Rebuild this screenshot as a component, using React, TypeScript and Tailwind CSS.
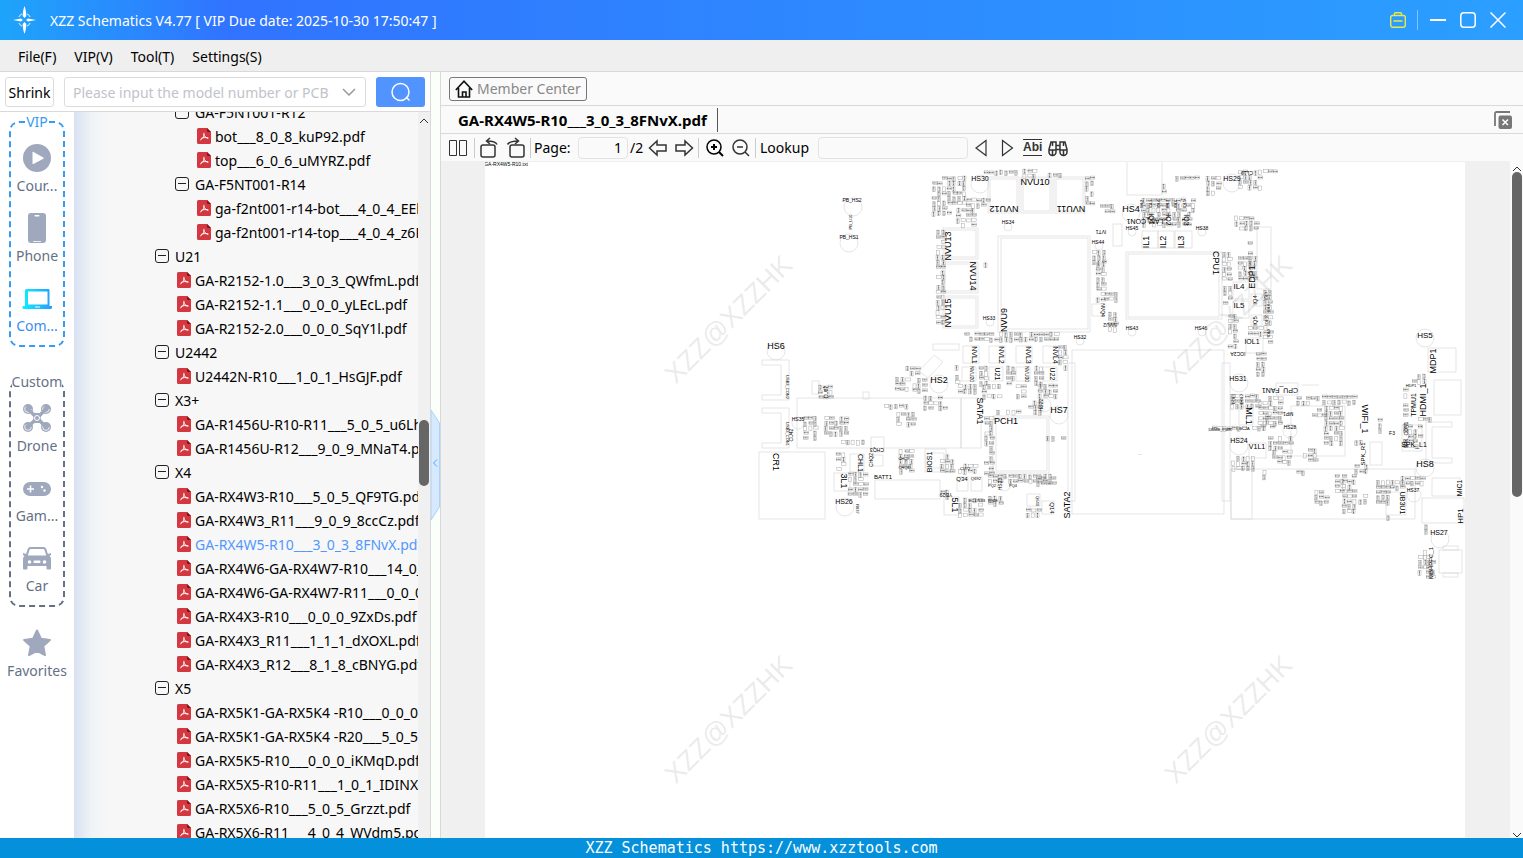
import { useState } from "react"
import type { ReactNode } from "react"

type TreeRow = {
  level: number
  label: string
  file?: boolean
}

const rows: TreeRow[] = [
  { level: 1, label: "GA-F5NT001-R12" },
  { level: 3, label: "bot___8_0_8_kuP92.pdf", file: true },
  { level: 3, label: "top___6_0_6_uMYRZ.pdf", file: true },
  { level: 1, label: "GA-F5NT001-R14" },
  { level: 3, label: "ga-f2nt001-r14-bot___4_0_4_EEk2P.pdf", file: true },
  { level: 3, label: "ga-f2nt001-r14-top___4_0_4_z6Rtq.pdf", file: true },
  { level: 0, label: "U21" },
  { level: 2, label: "GA-R2152-1.0___3_0_3_QWfmL.pdf", file: true },
  { level: 2, label: "GA-R2152-1.1___0_0_0_yLEcL.pdf", file: true },
  { level: 2, label: "GA-R2152-2.0___0_0_0_SqY1l.pdf", file: true },
  { level: 0, label: "U2442" },
  { level: 2, label: "U2442N-R10___1_0_1_HsGJF.pdf", file: true },
  { level: 0, label: "X3+" },
  { level: 2, label: "GA-R1456U-R10-R11___5_0_5_u6LhC.pdf", file: true },
  { level: 2, label: "GA-R1456U-R12___9_0_9_MNaT4.pdf", file: true },
  { level: 0, label: "X4" },
  { level: 2, label: "GA-RX4W3-R10___5_0_5_QF9TG.pdf", file: true },
  { level: 2, label: "GA-RX4W3_R11___9_0_9_8ccCz.pdf", file: true },
  { level: 2, label: "GA-RX4W5-R10___3_0_3_8FNvX.pdf", file: true },
  { level: 2, label: "GA-RX4W6-GA-RX4W7-R10___14_0_14.pdf", file: true },
  { level: 2, label: "GA-RX4W6-GA-RX4W7-R11___0_0_0.pdf", file: true },
  { level: 2, label: "GA-RX4X3-R10___0_0_0_9ZxDs.pdf", file: true },
  { level: 2, label: "GA-RX4X3_R11___1_1_1_dXOXL.pdf", file: true },
  { level: 2, label: "GA-RX4X3_R12___8_1_8_cBNYG.pdf", file: true },
  { level: 0, label: "X5" },
  { level: 2, label: "GA-RX5K1-GA-RX5K4 -R10___0_0_0.pdf", file: true },
  { level: 2, label: "GA-RX5K1-GA-RX5K4 -R20___5_0_5.pdf", file: true },
  { level: 2, label: "GA-RX5K5-R10___0_0_0_iKMqD.pdf", file: true },
  { level: 2, label: "GA-RX5X5-R10-R11___1_0_1_IDINX.pdf", file: true },
  { level: 2, label: "GA-RX5X6-R10___5_0_5_Grzzt.pdf", file: true },
  { level: 2, label: "GA-RX5X6-R11___4_0_4_WVdm5.pdf", file: true },
]

const indent = ["pl-[81px]", "pl-[101px]", "pl-[103px]", "pl-[123px]"]

const PdfIcon = () => (
  <svg viewBox="0 0 14 16" className="h-4 w-[14px] shrink-0">
    <path d="M1.500 0H10l4 4v10.500a1.500 1.500 0 0 1-1.500 1.500h-11A1.500 1.500 0 0 1 0 14.500v-13A1.500 1.500 0 0 1 1.500 0z" fill="#d4373f" />
    <path d="M10 0l4 4h-2.800A1.200 1.200 0 0 1 10 2.800z" fill="#7e1418" />
    <path d="M6.900 5.200c.6 2-.4 4.800-3.400 6.600M6.800 6.500c.5 2 2 3.500 4.200 3.600M4.300 10.400c1.800-.9 4-1.200 6.500-.4" fill="none" stroke="#fff" strokeWidth="1" strokeLinecap="round" />
  </svg>
)

const MinusBox = () => (
  <svg viewBox="0 0 14 14" className="size-[14px] shrink-0" fill="none" stroke="#222" strokeWidth="1">
    <rect x=".5" y=".5" width="13" height="13" rx="2.500" />
    <path d="M3 6.500h8" />
  </svg>
)

const Tree = () => {
  const [selected, setSelected] = useState("GA-RX4W5-R10___3_0_3_8FNvX.pdf")

  return (
    <div className="flex min-w-0 flex-1 overflow-hidden bg-[#f7f7f7]">
      <ul className="-mt-3 min-w-0 flex-1 overflow-hidden bg-linear-to-r from-[#d8e1f1] via-[#f0f3f7] via-5% to-[#f7f7f7] to-10%">
        {rows.map((row) => (
          <li key={row.label}>
            <button
              onClick={() => row.file && setSelected(row.label)}
              className={`${indent[row.level]} flex h-6 w-full items-center whitespace-nowrap text-[14px] ${
                row.file ? "gap-1" : "gap-1.5"
              } ${selected === row.label ? "text-[#5297ff]" : "text-black"}`}
            >
              {row.file ? <PdfIcon /> : <MinusBox />}
              {row.label}
            </button>
          </li>
        ))}
      </ul>
      <div className="flex w-3 shrink-0 flex-col items-center bg-[#f0f0f0] pt-1.5">
        <svg viewBox="0 0 10 6" className="h-1.5 w-2.5" fill="none" stroke="#333">
          <path d="M1 5l4-4 4 4" />
        </svg>
        <div className="mt-[296px] h-[66px] w-2.5 rounded-full bg-[#666]" />
      </div>
    </div>
  )
}

type NavItemProps = {
  label: string
  active?: boolean
  children: ReactNode
}

const NavItem = ({ label, active, children }: NavItemProps) => (
  <button
    className={`flex h-[70px] w-full flex-col items-center whitespace-nowrap pt-3 text-[14px] ${
      active ? "text-[#3b8df0]" : "text-[#667085]"
    }`}
  >
    <svg viewBox="0 0 28 28" className="size-7 shrink-0 overflow-visible" fill="#9fa8bc">
      {children}
    </svg>
    <span className="mt-1 leading-5">{label}</span>
  </button>
)

const Sidebar = () => (
  <nav className="flex w-[74px] shrink-0 flex-col items-center bg-white">
    <fieldset className="w-14 min-w-0 rounded-[10px] border-2 border-dashed border-[#359bf3] pb-[3px]">
      <legend className="mx-auto text-[14px] leading-5 text-[#359bf3]">VIP</legend>
      <NavItem label="Cour...">
        <circle cx="14" cy="14" r="14" />
        <path d="M9.500 8.500v11c0 .6.500.800 1 .5l9.800-5.300c.5-.3.5-.9 0-1.200L10.500 8c-.5-.3-1-.1-1 .5z" fill="#fff" />
      </NavItem>
      <NavItem label="Phone">
        <rect x="5" y="-1" width="18" height="30" rx="3" />
        <rect x="11.500" y="1" width="5" height="1.500" rx=".7" fill="#fff" />
        <path d="M10 27.500h8" stroke="#fff" strokeWidth=".8" />
      </NavItem>
      <NavItem label="Com..." active>
        <defs>
          <linearGradient id="laptop" x1="0" y1="0" x2="1" y2="0">
            <stop offset="0" stopColor="#0bf0ff" />
            <stop offset="1" stopColor="#259cff" />
          </linearGradient>
        </defs>
        <path
          d="M3.500 5h22a1 1 0 0 1 1 1v16h2.500v1.500a1.500 1.500 0 0 1-1.500 1.500H1a1.500 1.500 0 0 1-1.500-1.500V22H2V6.500A1.500 1.500 0 0 1 3.500 5zM5 7.500v13h19.500v-13zM12 22.500v1h5v-1z"
          fill="url(#laptop)"
          fillRule="evenodd"
        />
      </NavItem>
    </fieldset>
    <fieldset className="mt-[25px] w-14 min-w-0 rounded-[10px] border-2 border-dashed border-[#667085] pb-[3px]">
      <legend className="mx-auto flex w-[50px] justify-center text-[14px] leading-5 text-[#667085]">Custom</legend>
      <NavItem label="Drone">
        {[5, 23].map((cx) =>
          [5, 23].map((cy) => (
            <g key={`${cx}-${cy}`}>
              <circle cx={cx} cy={cy} r="5" />
              <circle cx={cx} cy={cy} r="3.300" fill="none" stroke="#fff" strokeWidth=".8" strokeDasharray="13 8" />
            </g>
          )),
        )}
        <path d="M6 6l16 16M22 6L6 22" stroke="#9fa8bc" strokeWidth="3.500" />
        <path d="M9 9h10l-1.500 5L19 19H9l1.500-5z" />
        <circle cx="14" cy="14" r="2.500" fill="none" stroke="#fff" />
      </NavItem>
      <NavItem label="Gam...">
        <rect x="0" y="8" width="28" height="14" rx="7" />
        <path d="M7.500 11.500v7M4 15h7" stroke="#fff" strokeWidth="1.500" />
        <circle cx="19" cy="13" r="1.200" fill="#fff" />
        <circle cx="21.500" cy="16.500" r="1.200" fill="#fff" />
      </NavItem>
      <NavItem label="Car">
        <path
          d="M7.500 3h13a3 3 0 0 1 2.800 2l1.600 5 3.100-1v2l-1.500 1c1 .8 1.500 1.800 1.500 3v9.500a1 1 0 0 1-1 1h-2.500a1 1 0 0 1-1-1V22h-19v2.500a1 1 0 0 1-1 1H1a1 1 0 0 1-1-1V15c0-1.200.5-2.200 1.500-3L0 11V9l3.100 1 1.600-5a3 3 0 0 1 2.800-2zM8 5a1.500 1.500 0 0 0-1.500 1l-1.700 5.500h18.400L21.500 6A1.500 1.500 0 0 0 20 5z"
          fillRule="evenodd"
        />
        <circle cx="6.500" cy="18" r="1.800" fill="#fff" />
        <circle cx="21.500" cy="18" r="1.800" fill="#fff" />
        <rect x="10.500" y="16.500" width="7" height="2.500" rx="1" fill="#fff" />
      </NavItem>
    </fieldset>
    <div className="mt-2.5 w-full">
      <NavItem label="Favorites">
        <path d="M14 1.500l3.900 8.200 9 1.200-6.600 6.200 1.700 9-8-4.300-8 4.300 1.700-9L1.100 10.900l9-1.200z" stroke="#9fa8bc" strokeWidth="2" strokeLinejoin="round" />
      </NavItem>
    </div>
  </nav>
)

type Box = [x: number, y: number, w: number, h: number]

const packages: Box[] = [
  [998, 236, 92, 96],
  [1001, 238, 87, 91],
  [1126, 252, 96, 67],
  [1128, 254, 91, 63],
  [988, 177, 31, 36],
  [990, 179, 27, 32],
  [1021, 177, 31, 36],
  [1023, 179, 27, 32],
  [1054, 177, 31, 36],
  [1056, 179, 27, 32],
  [943, 228, 35, 31],
  [945, 230, 31, 27],
  [943, 262, 35, 31],
  [945, 264, 31, 27],
  [943, 296, 35, 32],
  [945, 298, 31, 28],
  [1127, 158, 35, 37],
  [1142, 231, 16, 17],
  [1158, 231, 16, 17],
  [1175, 231, 17, 17],
  [1113, 224, 9, 22],
  [1092, 304, 12, 12],
  [1257, 227, 14, 62],
  [1233, 282, 16, 17],
  [1233, 301, 16, 17],
  [1251, 294, 11, 12],
  [1251, 315, 11, 11],
  [1246, 338, 17, 15],
  [759, 452, 66, 67],
  [797, 398, 164, 50],
  [961, 398, 20, 50],
  [993, 416, 56, 57],
  [996, 418, 51, 53],
  [875, 480, 65, 19],
  [925, 449, 21, 23],
  [926, 453, 18, 15],
  [933, 344, 26, 6],
  [963, 346, 16, 17],
  [989, 346, 16, 17],
  [1016, 346, 16, 17],
  [1043, 346, 16, 17],
  [962, 367, 14, 14],
  [989, 367, 14, 14],
  [1016, 367, 14, 14],
  [1043, 367, 14, 14],
  [850, 454, 14, 18],
  [834, 473, 16, 18],
  [871, 437, 13, 15],
  [872, 455, 11, 11],
  [944, 497, 15, 18],
  [957, 477, 11, 14],
  [971, 477, 11, 14],
  [1027, 494, 13, 12],
  [1042, 501, 12, 13],
  [812, 381, 7, 13],
  [863, 392, 6, 7],
  [1072, 350, 152, 164],
  [1068, 363, 7, 138],
  [1222, 363, 8, 138],
  [1231, 469, 184, 50],
  [1231, 469, 21, 50],
  [1291, 406, 54, 50],
  [1276, 383, 22, 12],
  [1428, 348, 28, 24],
  [1434, 380, 27, 35],
  [1432, 478, 28, 18],
  [1422, 498, 42, 25],
  [1386, 492, 20, 23],
  [1439, 550, 23, 23],
  [1443, 546, 15, 4],
  [1443, 573, 15, 4],
  [1370, 442, 12, 23],
  [1239, 407, 14, 18],
  [1249, 443, 17, 15],
  [1402, 425, 20, 26],
]

// small passives are scattered inside these areas
const clusters: Box[] = [
  [932, 176, 18, 38],
  [952, 176, 14, 28],
  [966, 198, 22, 10],
  [956, 208, 18, 18],
  [984, 170, 36, 6],
  [1022, 169, 14, 8],
  [1048, 173, 16, 4],
  [1085, 176, 8, 30],
  [1100, 204, 14, 10],
  [936, 230, 7, 95],
  [978, 262, 7, 6],
  [1092, 250, 12, 14],
  [1096, 262, 8, 40],
  [1104, 292, 12, 8],
  [1108, 312, 10, 20],
  [1141, 198, 52, 12],
  [1142, 212, 50, 14],
  [1175, 176, 22, 5],
  [1162, 184, 6, 12],
  [1206, 176, 14, 20],
  [1238, 170, 22, 18],
  [1258, 169, 20, 5],
  [1222, 252, 10, 30],
  [1223, 286, 8, 18],
  [1234, 216, 22, 16],
  [1248, 236, 6, 28],
  [1238, 256, 18, 24],
  [1263, 290, 9, 52],
  [1228, 314, 10, 36],
  [1248, 326, 14, 10],
  [964, 332, 92, 10],
  [955, 365, 6, 18],
  [979, 366, 9, 18],
  [1006, 366, 9, 18],
  [1034, 366, 9, 18],
  [958, 384, 18, 8],
  [982, 384, 18, 12],
  [1016, 384, 8, 12],
  [1038, 384, 18, 12],
  [1058, 345, 10, 24],
  [905, 366, 12, 10],
  [895, 377, 14, 16],
  [912, 378, 16, 16],
  [923, 396, 22, 12],
  [884, 404, 22, 6],
  [896, 412, 18, 12],
  [803, 416, 16, 24],
  [824, 416, 22, 18],
  [818, 385, 12, 12],
  [836, 440, 30, 6],
  [899, 449, 12, 24],
  [836, 452, 10, 18],
  [848, 472, 20, 26],
  [940, 454, 16, 18],
  [958, 464, 20, 10],
  [984, 416, 8, 58],
  [996, 410, 26, 6],
  [1028, 400, 12, 14],
  [988, 474, 66, 8],
  [1036, 476, 18, 8],
  [940, 490, 10, 8],
  [958, 498, 26, 18],
  [988, 496, 14, 8],
  [1026, 508, 14, 10],
  [1046, 436, 18, 6],
  [1230, 394, 28, 12],
  [1258, 396, 26, 28],
  [1260, 414, 16, 16],
  [1212, 426, 52, 6],
  [1268, 436, 26, 14],
  [1272, 450, 20, 16],
  [1303, 448, 14, 16],
  [1231, 456, 22, 12],
  [1322, 395, 32, 8],
  [1296, 396, 24, 8],
  [1312, 408, 16, 10],
  [1324, 406, 20, 40],
  [1256, 352, 8, 22],
  [1262, 470, 4, 10],
  [1296, 470, 10, 6],
  [1314, 490, 16, 12],
  [1335, 474, 8, 18],
  [1342, 474, 14, 40],
  [1358, 494, 8, 10],
  [1376, 480, 14, 22],
  [1390, 480, 14, 10],
  [1400, 476, 24, 10],
  [1386, 515, 10, 5],
  [1403, 388, 4, 30],
  [1412, 374, 12, 10],
  [1403, 424, 18, 24],
  [1354, 440, 10, 4],
  [1354, 464, 12, 8],
  [1418, 550, 8, 22],
  [1424, 524, 6, 8],
  [1426, 555, 8, 22],
  [1378, 418, 3, 12],
  [1418, 417, 12, 4],
]

const circles: [number, number, number][] = [
  [853, 207, 9],
  [849, 243, 9],
  [776, 351, 9],
  [939, 384, 9],
  [1059, 415, 9],
  [845, 507, 9],
  [980, 184, 9],
  [1131, 213, 9],
  [1232, 183, 9],
  [1239, 383, 9],
  [1239, 446, 9],
  [1425, 338, 9],
  [1425, 468, 9],
  [1440, 539, 9],
  [1008, 227, 4],
  [990, 322, 4],
  [1099, 246, 4],
  [1132, 232, 4],
  [1202, 232, 4],
  [1132, 332, 4],
  [1202, 332, 4],
  [1080, 341, 4],
  [798, 423, 6],
  [1044, 405, 7],
  [1004, 484, 7],
  [1290, 431, 7],
  [1414, 495, 7],
]

type Label = [text: string, x: number, y: number, size: number, angle?: number]

const labels: Label[] = [
  ["HS30", 980, 178, 7],
  ["NVU10", 1035, 182, 9],
  ["NVU12", 1004, 209, 9, 180],
  ["NVU11", 1071, 209, 9, 180],
  ["HS34", 1008, 222, 5],
  ["NVU13", 948, 246, 9, -90],
  ["NVU14", 973, 276, 9, 90],
  ["NVU15", 948, 313, 9, -90],
  ["NVU9", 1004, 320, 9, -90],
  ["HS33", 989, 318, 5],
  ["HS44", 1098, 242, 5],
  ["IVT1", 1101, 232, 5, 180],
  ["HS4", 1131, 209, 9],
  ["HS45", 1132, 228, 5],
  ["LAN_CON1", 1145, 222, 7, 180],
  ["IQ1", 1152, 219, 7, 90],
  ["IQ2", 1169, 220, 7, 90],
  ["IQ3", 1187, 220, 7, 90],
  ["IOL2", 1142, 204, 4, -90],
  ["IOL1", 1151, 204, 4, -90],
  ["IOL4", 1159, 204, 4, -90],
  ["IOL3", 1168, 204, 4, -90],
  ["IOL6", 1176, 204, 4, -90],
  ["IOL5", 1185, 204, 4, -90],
  ["IL1", 1146, 242, 9, -90],
  ["IL2", 1163, 242, 9, -90],
  ["IL3", 1181, 242, 9, -90],
  ["HS38", 1202, 228, 5],
  ["HS29", 1232, 178, 7],
  ["CL19", 1247, 173, 5, 180],
  ["CPU1", 1216, 263, 9, 90],
  ["EDP1", 1252, 277, 9, -90],
  ["IL4", 1239, 286, 8],
  ["IL5", 1239, 305, 8],
  ["IQ4", 1255, 300, 6, -90],
  ["IQ5", 1255, 321, 6, -90],
  ["IOL7", 1267, 296, 4, -90],
  ["IOL8", 1269, 308, 4, -90],
  ["IOL10", 1267, 320, 4, -90],
  ["IOL9", 1269, 333, 4, -90],
  ["IOL1", 1252, 341, 7],
  ["NVQ4", 1103, 310, 5, 90],
  ["NVU2", 1110, 325, 5, 180],
  ["HS43", 1132, 328, 5],
  ["HS46", 1201, 328, 5],
  ["HS32", 1080, 337, 5],
  ["PB_HS2", 852, 200, 5],
  ["PB_HS1", 849, 237, 5],
  ["PB_U10", 851, 222, 4, -90],
  ["HS6", 776, 346, 9],
  ["HS2", 939, 380, 9],
  ["SATA1", 980, 411, 9, 90],
  ["PCH1", 1006, 421, 9],
  ["HS7", 1059, 410, 9],
  ["NVL1", 975, 355, 7, 90],
  ["NVL2", 1002, 355, 7, 90],
  ["NVL3", 1029, 355, 7, 90],
  ["NVL4", 1056, 355, 7, 90],
  ["NVU20", 972, 374, 5, 90],
  ["U21", 998, 374, 7, 90],
  ["NVU30", 1027, 374, 5, 90],
  ["U22", 1053, 374, 7, 90],
  ["CR1", 776, 462, 9, 90],
  ["BATT1", 883, 477, 6],
  ["BIOS1", 929, 462, 7, -90],
  ["CHL1", 861, 463, 7, 90],
  ["3L1", 844, 481, 9, 90],
  ["HS26", 844, 501, 7],
  ["Q34", 962, 479, 6],
  ["Q692", 976, 479, 4],
  ["5L1", 955, 505, 9, 90],
  ["Q14", 1052, 508, 6, 90],
  ["Q640", 1037, 501, 4, 90],
  ["SATA2", 1067, 505, 9, -90],
  ["HS22", 1041, 405, 5, -90],
  ["HS23", 1000, 484, 5, -90],
  ["HS35", 798, 419, 5],
  ["USB3_CON2", 787, 387, 4, 90],
  ["USB3_CON1", 787, 434, 4, 90],
  ["CU87", 826, 392, 5, -90],
  ["CU42", 791, 435, 5, -90],
  ["CHQ3", 877, 450, 5, 180],
  ["CHQ2", 871, 460, 5, -90],
  ["CHQ9", 904, 459, 4],
  ["CHQ8", 904, 468, 4],
  ["CU72", 965, 469, 4],
  ["YD29", 946, 495, 5, 180],
  ["PQ2", 992, 486, 4],
  ["PQ4", 1013, 486, 4],
  ["R90E", 993, 501, 4],
  ["EC17L03", 977, 501, 4],
  ["R837", 857, 509, 4, 90],
  ["HS5", 1425, 335, 8],
  ["MDP1", 1433, 361, 9, -90],
  ["HDMI_1", 1423, 400, 9, -90],
  ["TPMU1", 1413, 405, 7, -90],
  ["HDP1", 1411, 386, 4],
  ["F3", 1392, 433, 5],
  ["SPK_L1", 1414, 444, 7],
  ["SPK_CON1", 1406, 435, 5, -90],
  ["HS8", 1425, 464, 9],
  ["HS37", 1413, 490, 5],
  ["MIC1", 1459, 488, 7, -90],
  ["HP1", 1460, 516, 8, -90],
  ["HS27", 1439, 532, 7],
  ["UB3U1", 1403, 503, 7, 90],
  ["SPK_R1", 1363, 454, 6, -90],
  ["WIFI_1", 1365, 419, 9, 90],
  ["CPU_FAN1", 1280, 391, 7, 180],
  ["HS28", 1290, 427, 5],
  ["V1L1", 1257, 446, 7],
  ["HS24", 1239, 440, 7],
  ["ML1", 1249, 416, 9, 90],
  ["HS31", 1238, 378, 7],
  ["IOC2A", 1238, 354, 5, 180],
  ["DOL1", 1234, 399, 4, -90],
  ["DOL2", 1242, 399, 4, -90],
  ["MP1", 1288, 414, 5, 180],
  ["DBMB_PWR", 1220, 430, 4],
  ["QBC2A", 1243, 429, 4],
  ["MBHPFC_1", 1431, 563, 6, -90],
]

const watermarks = [
  [728, 319],
  [1228, 319],
  [728, 719],
  [1228, 719],
]

const Cluster = ({ box: [x, y, w, h] }: { box: Box }) => {
  let seed = x * 31 + y * 17
  const next = () => {
    seed = (seed * 1103515245 + 12345) % 2147483648
    return seed / 2147483648
  }
  const parts = []
  for (let cy = y; cy < y + h - 1; cy += 5) {
    for (let cx = x; cx < x + w - 1; cx += 5) {
      const roll = next()
      if (roll < 0.12) continue
      const tall = next() > 0.5
      const px = cx + next()
      const py = cy + next()
      parts.push(
        <g key={`${cx}-${cy}`}>
          <rect x={px} y={py} width={tall ? 3 : 4.5} height={tall ? 4.5 : 3} stroke="#aaa" />
          {roll > 0.3 && (
            <path
              d={tall ? `M${px + 1.5} ${py}v4.500` : `M${px} ${py + 1.5}h4.500`}
              stroke="#555"
              strokeWidth=".9"
              strokeDasharray="1 .4"
            />
          )}
        </g>,
      )
    }
  }
  return <g>{parts}</g>
}

const Board = () => (
  <svg viewBox="485 162 980 676" className="h-[676px] w-[980px] shrink-0 bg-white font-['Liberation_Sans',sans-serif]">
    <g fill="none" stroke="#d4d4d4" strokeWidth=".6">
      {packages.map(([x, y, w, h]) => (
        <rect key={`${x}-${y}-${w}`} x={x} y={y} width={w} height={h} />
      ))}
      {circles.map(([cx, cy, r]) => (
        <circle key={`${cx}-${cy}`} cx={cx} cy={cy} r={r} />
      ))}
      <path d="M762 360h27v40h-27v-5h19v-30h-19zM762 408h27v40h-27v-5h19v-30h-19z" />
      <path d="M1426 422h26v5h-20v31h20v5h-26zM919 371l15-16 9 7-15 16zM1138 454.500h4M1302 385h17" />
    </g>
    <g fill="none" strokeWidth=".5">
      {clusters.map((box) => (
        <Cluster key={`${box[0]}-${box[1]}`} box={box} />
      ))}
    </g>
    <g textAnchor="middle" fill="#000">
      {labels.map(([text, x, y, size, angle = 0]) => (
        <text key={`${text}-${x}-${y}`} transform={`translate(${x} ${y}) rotate(${angle})`} dy=".36em" fontSize={size}>
          {text}
        </text>
      ))}
      <text x="506" y="166" fontSize="5">
        GA-RX4W5-R10.txt
      </text>
    </g>
    <g textAnchor="middle" fill="#999" fillOpacity=".2" fontSize="27">
      {watermarks.map(([x, y]) => (
        <text key={`${x}-${y}`} transform={`translate(${x} ${y}) rotate(-45)`} dy=".36em">
          XZZ@XZZHK
        </text>
      ))}
    </g>
  </svg>
)

type ToolProps = {
  label: string
  className?: string
  children: ReactNode
}

const Tool = ({ label, className, children }: ToolProps) => (
  <button aria-label={label} className={`${className ?? ""} shrink-0`}>
    <svg viewBox="0 0 20 22" className="h-[22px] w-5" fill="none" stroke="#333" strokeWidth="1.500">
      {children}
    </svg>
  </button>
)

const Divider = () => <span className="h-5 w-px shrink-0 bg-[#ccc]" />

const Toolbar = () => {
  const [page, setPage] = useState("1")
  const [query, setQuery] = useState("")

  return (
    <div className="flex h-[27px] shrink-0 items-center bg-[#fafafa] pl-[7px] text-[14px]">
      <Tool label="Two pages">
        <path d="M1.500 3.500h7v15h-7zM11.500 3.500h7v15h-7z" strokeWidth="1" />
      </Tool>
      <span className="w-1.5" />
      <Divider />
      <Tool label="Rotate left" className="ml-1">
        <rect x="2" y="8" width="14" height="12" rx="2" />
        <path d="M18 7.500C17 5 14 4 8 4M11 1L7.500 4l3.500 3" />
      </Tool>
      <Tool label="Rotate right" className="ml-[7px]">
        <rect x="4" y="8" width="14" height="12" rx="2" />
        <path d="M1.500 7.500C3 5 6 4 12 4M9 1l3.500 3L9 7" />
      </Tool>
      <span className="w-1" />
      <Divider />
      <label htmlFor="page" className="ml-[3px] w-11">
        Page:
      </label>
      <input
        id="page"
        value={page}
        onChange={(event) => setPage(event.target.value)}
        className="h-[22px] w-[50px] rounded-sm border border-[#e3e3e3] bg-[#fafafa] px-[5px] text-right outline-none"
      />
      <span className="ml-0.5 w-4">/2</span>
      <Tool label="Previous page" className="ml-0.5">
        <path d="M1.500 11L9 4v4h9v6H9v4z" />
      </Tool>
      <Tool label="Next page" className="ml-1.5">
        <path d="M18.500 11L11 4v4H2v6h9v4z" />
      </Tool>
      <span className="w-1" />
      <Divider />
      <Tool label="Zoom in" className="ml-1.5">
        <circle cx="9" cy="10" r="7" stroke="#000" />
        <path d="M14 15l4 4M9 7v6M6 10h6" stroke="#000" strokeWidth="2" />
      </Tool>
      <Tool label="Zoom out" className="ml-1.5">
        <circle cx="9" cy="10" r="7" />
        <path d="M14 15l4 4M6 10h6" />
      </Tool>
      <span className="w-1" />
      <Divider />
      <label htmlFor="lookup" className="ml-1 w-[58px]">
        Lookup
      </label>
      <input
        id="lookup"
        value={query}
        onChange={(event) => setQuery(event.target.value)}
        className="h-[22px] w-[150px] rounded-sm border border-[#e3e3e3] bg-[#fafafa] px-1.5 outline-none"
      />
      <Tool label="Find previous" className="ml-1">
        <path d="M14 3.500v15L4 11z" strokeWidth="1.200" />
      </Tool>
      <Tool label="Find next" className="ml-[5px]">
        <path d="M5.500 3.500v15l10-7.500z" strokeWidth="1.200" />
      </Tool>
      <button className="ml-1.5 h-[17px] border-y border-[#333] font-['Liberation_Sans',sans-serif] text-[12px] font-bold leading-[15px] text-[#333]">
        Abi
      </button>
      <Tool label="Search text" className="ml-1.5">
        <path d="M1 12.500L3 5h5v10a3.500 3.500 0 1 1-7 0zM19 12.500L17 5h-5v10a3.500 3.500 0 1 0 7 0zM8 8.500h4M8 12.500h4M1 13h7M12 13h7M4.500 13v5M15.500 13v5M4.500 5v4M15.500 5v4" />
      </Tool>
    </div>
  )
}

const Viewer = () => (
  <section className="flex min-w-0 flex-1 flex-col border-l border-[#d9d9d9] bg-[#fafafa]">
    <div className="flex h-[34px] shrink-0 items-center border-b border-[#d9d9d9] pl-2">
      <button className="flex h-6 items-center gap-1 rounded-[3px] border border-[#777] px-[5px] text-[14px] text-[#888]">
        <svg viewBox="0 0 18 18" className="size-[18px]" fill="none" stroke="#111" strokeWidth="1.600">
          <path d="M.8 10L9 1.200 17.200 10M3.500 8v9h11V8M7.500 17v-5h3.500v5" />
        </svg>
        Member Center
      </button>
    </div>
    <div className="flex h-7 shrink-0 items-center justify-between border-b border-[#d9d9d9] pl-[17px] pr-[11px]">
      <button className="h-6 whitespace-nowrap border-r border-[#555] pr-2.5 text-[15px] font-bold leading-6">
        GA-RX4W5-R10___3_0_3_8FNvX.pdf
      </button>
      <button aria-label="Close all">
        <svg viewBox="0 0 18 18" className="size-[18px]" fill="none">
          <path d="M1 15V2.500A1.500 1.500 0 0 1 2.500 1H16" stroke="#777" strokeWidth="1.800" />
          <rect x="4.500" y="4.500" width="13.500" height="13.500" rx="2" fill="#777" />
          <path d="M8.500 8.500l5.500 5.500M14 8.500L8.500 14" stroke="#fff" strokeWidth="1.500" />
        </svg>
      </button>
    </div>
    <Toolbar />
    <div className="flex min-h-0 flex-1">
      <div className="flex min-w-0 flex-1 items-start justify-center overflow-hidden bg-[#f0f0f0] pr-px pt-px">
        <Board />
      </div>
      <div className="flex w-[13px] shrink-0 flex-col items-center pt-[5px]">
        <svg viewBox="0 0 10 6" className="h-1.5 w-2.5 shrink-0" fill="none" stroke="#333">
          <path d="M1 5l4-4 4 4" />
        </svg>
        <div className="h-[325px] w-2.5 rounded-full bg-[#666]" />
        <svg viewBox="0 0 10 6" className="mt-auto h-1.5 w-2.5 shrink-0" fill="none" stroke="#333">
          <path d="M1 1l4 4 4-4" />
        </svg>
      </div>
    </div>
  </section>
)

const SearchBar = () => {
  const [model, setModel] = useState("")

  return (
    <div className="flex h-10 shrink-0 items-center border-b border-[#d9d9d9] bg-white px-[5px] pt-px text-[14px]">
      <button className="h-[30px] w-[49px] rounded-[3px] border border-[#dcdcdc]">Shrink</button>
      <div className="ml-2.5 flex h-[30px] min-w-0 flex-1 items-center rounded-[3px] border border-[#dcdcdc] px-2">
        <input
          aria-label="Model number"
          value={model}
          onChange={(event) => setModel(event.target.value)}
          placeholder="Please input the model number or PCB"
          className="min-w-0 flex-1 outline-none placeholder:text-[#bfc3cb]"
        />
        <svg viewBox="0 0 14 8" className="ml-1.5 mr-px h-2 w-3.5 shrink-0" fill="none" stroke="#999" strokeWidth="1.500">
          <path d="M1 1l6 6 6-6" />
        </svg>
      </div>
      <button aria-label="Search" className="ml-2.5 flex h-[30px] w-[49px] items-center justify-center rounded-[3px] bg-[#5294ff]">
        <svg viewBox="0 0 20 20" className="size-5" fill="none" stroke="#fff" strokeWidth="1.500">
          <circle cx="9.500" cy="10" r="8.500" />
          <path d="M15 15l3.500 3.500" />
        </svg>
      </button>
    </div>
  )
}

const TitleBar = () => (
  <header className="flex h-10 shrink-0 items-center bg-linear-to-r from-[#1ea4fa] via-[#3173ff] via-15% to-[#2b9fff] pl-2.5 pr-[17px] text-[14px] text-white">
    <svg viewBox="0 0 28 30" className="h-[30px] w-7" fill="#fff">
      <path d="M14.500 1c1.200 3 1.800 7 1.800 10l-1.800 2-1.800-2c0-3 .6-7 1.800-10zM14.500 29c1.200-3 1.800-7 1.800-10l-1.800-2-1.800 2c0 3 .6 7 1.800 10z" />
      <path d="M3 15l8-1.500 2 1.500-2 1.500zM26 15l-8-1.500-2 1.500 2 1.500z" />
      <path d="M9 12c.5-1.500 1.500-2.500 3-3M17 9c1.500.5 2.500 1.500 3 3M9 18c.5 1.500 1.500 2.500 3 3M17 21c1.500-.5 2.500-1.500 3-3" fill="none" stroke="#fff" strokeWidth=".9" />
    </svg>
    <h1 className="ml-3 flex-1 whitespace-nowrap">XZZ Schematics V4.77 [ VIP Due date: 2025-10-30 17:50:47 ]</h1>
    <button aria-label="Toolbox" className="mr-px">
      <svg viewBox="0 0 16 16" className="size-4" fill="none" stroke="#e9e84a" strokeWidth="1.400">
        <rect x=".7" y="3.500" width="14.600" height="11.800" rx="2" />
        <path d="M4.500 3.500V1.800a1 1 0 0 1 1-1h5a1 1 0 0 1 1 1v1.700M3.500 9h9" />
      </svg>
    </button>
    <span className="ml-2.5 mr-3 h-5 w-px bg-white/40" />
    <div className="flex gap-3.5">
      <button aria-label="Minimize">
        <svg viewBox="0 0 16 16" className="size-4" stroke="#fff" strokeWidth="2">
          <path d="M0 8h16" />
        </svg>
      </button>
      <button aria-label="Maximize">
        <svg viewBox="0 0 16 16" className="size-4" fill="none" stroke="#fff" strokeWidth="1.500">
          <rect x=".8" y=".8" width="14.400" height="14.400" rx="3" />
        </svg>
      </button>
      <button aria-label="Close">
        <svg viewBox="0 0 16 16" className="size-4" stroke="#fff" strokeWidth="1.500">
          <path d="M.5.5l15 15M15.500.5l-15 15" />
        </svg>
      </button>
    </div>
  </header>
)

const App = () => {
  return (
    <div className="flex h-screen flex-col overflow-hidden bg-white font-['Noto_Sans',sans-serif] text-black">
      <TitleBar />
      <div className="flex h-8 shrink-0 items-center gap-[18px] border-b border-[#d9d9d9] bg-[#efefef] pl-[18px] pt-0.5 text-[14px]">
        {["File(F)", "VIP(V)", "Tool(T)", "Settings(S)"].map((menu) => (
          <button key={menu}>{menu}</button>
        ))}
      </div>
      <main className="flex min-h-0 flex-1">
        <div className="flex w-[430px] shrink-0 flex-col">
          <SearchBar />
          <div className="flex min-h-0 flex-1">
            <Sidebar />
            <Tree />
          </div>
        </div>
        <div className="flex w-2.5 shrink-0 items-center border-l border-[#d9d9d9] bg-[#fafffa] pt-5">
          <button aria-label="Collapse panel">
            <svg viewBox="0 0 9 110" className="h-[110px] w-[9px]" fill="none" stroke="#7cc0ff">
              <path d="M0 0l8.500 13v84L0 110z" fill="#d6e9ff" stroke="#a8d3fd" />
              <path d="M6 49.500L2.500 53 6 56.500" stroke="#4fa9fb" />
            </svg>
          </button>
        </div>
        <Viewer />
      </main>
      <footer className="flex h-5 shrink-0 items-center justify-center bg-[#0490da] font-['DejaVu_Sans_Mono',monospace] text-[15px] leading-5 text-white">
        XZZ Schematics https://www.xzztools.com
      </footer>
    </div>
  )
}

export default App
